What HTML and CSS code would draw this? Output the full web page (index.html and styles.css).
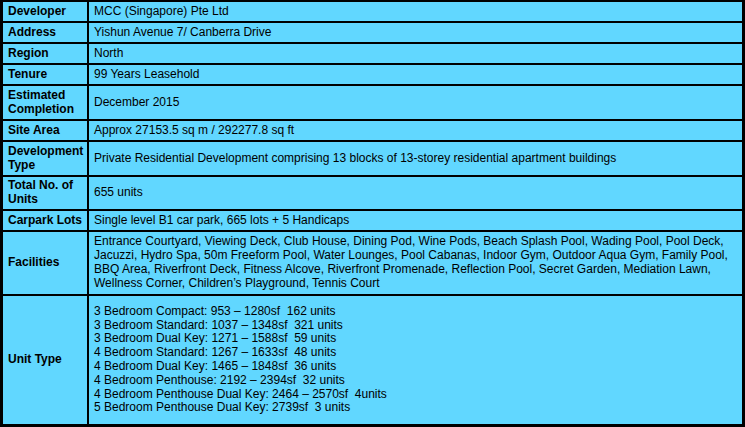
FILE: index.html
```html
<!DOCTYPE html>
<html lang="en">
<head>
<meta charset="utf-8">
<title>Project Details</title>
<link rel="stylesheet" href="styles.css">
</head>
<body>
<table class="details">
  <colgroup><col class="col-label"><col class="col-value"></colgroup>
  <tbody>
    <tr class="h19"><th>Developer</th><td>MCC (Singapore) Pte Ltd</td></tr>
    <tr class="h19"><th>Address</th><td>Yishun Avenue 7/ Canberra Drive</td></tr>
    <tr class="h19"><th>Region</th><td>North</td></tr>
    <tr class="h19"><th>Tenure</th><td>99 Years Leasehold</td></tr>
    <tr class="h33"><th>Estimated Completion</th><td>December 2015</td></tr>
    <tr class="h19"><th>Site Area</th><td>Approx 27153.5 sq m / 292277.8 sq ft</td></tr>
    <tr class="h33"><th>Development Type</th><td>Private Residential Development comprising 13 blocks of 13-storey residential apartment buildings</td></tr>
    <tr class="h32"><th>Total No. of Units</th><td>655 units</td></tr>
    <tr class="h19"><th>Carpark Lots</th><td>Single level B1 car park, 665 lots + 5 Handicaps</td></tr>
    <tr class="h62"><th>Facilities</th><td>Entrance Courtyard, Viewing Deck, Club House, Dining Pod, Wine Pods, Beach Splash Pool, Wading Pool, Pool Deck, Jacuzzi, Hydro Spa, 50m Freeform Pool, Water Lounges, Pool Cabanas, Indoor Gym, Outdoor Aqua Gym, Family Pool, BBQ Area, Riverfront Deck, Fitness Alcove, Riverfront Promenade, Reflection Pool, Secret Garden, Mediation Lawn, Wellness Corner, Children’s Playground, Tennis Court</td></tr>
    <tr class="h128 last"><th>Unit Type</th><td>3 Bedroom Compact: 953 – 1280sf&nbsp; 162 units<br>3 Bedroom Standard: 1037 – 1348sf&nbsp; 321 units<br>3 Bedroom Dual Key: 1271 – 1588sf&nbsp; 59 units<br>4 Bedroom Standard: 1267 – 1633sf&nbsp; 48 units<br>4 Bedroom Dual Key: 1465 – 1848sf&nbsp; 36 units<br>4 Bedroom Penthouse: 2192 – 2394sf&nbsp; 32 units<br>4 Bedroom Penthouse Dual Key: 2464 – 2570sf&nbsp; 4units<br>5 Bedroom Penthouse Dual Key: 2739sf&nbsp; 3 units</td></tr>
  </tbody>
</table>
</body>
</html>
```
FILE: styles.css
```css
html, body {
  margin: 0;
  padding: 0;
  background: #61d7ff;
}
body {
  font-family: "Liberation Sans", Arial, sans-serif;
  font-size: 12px;
  color: #000;
}
.details {
  box-sizing: border-box;
  width: 745px;
  table-layout: fixed;
  border-collapse: separate;
  border-spacing: 0;
  background: #61d7ff;
  border-style: solid;
  border-color: #000;
  border-width: 2px 3px 3px 3px;
}
.col-label { width: 86px; }
.details th,
.details td {
  padding: 0 4px 0 5px;
  vertical-align: middle;
  border-bottom: 2px solid #000;
  line-height: 13.8px;
}
.details th {
  text-align: left;
  font-weight: bold;
  border-right: 2px solid #000;
}
.details tr.last th,
.details tr.last td { border-bottom: 0; }
.h19 th, .h19 td { height: 19px; }
.h32 th, .h32 td { height: 32px; }
.h33 th, .h33 td { height: 33px; }
.h62 th, .h62 td { height: 62px; }
.h128 th, .h128 td { height: 128px; }
```
